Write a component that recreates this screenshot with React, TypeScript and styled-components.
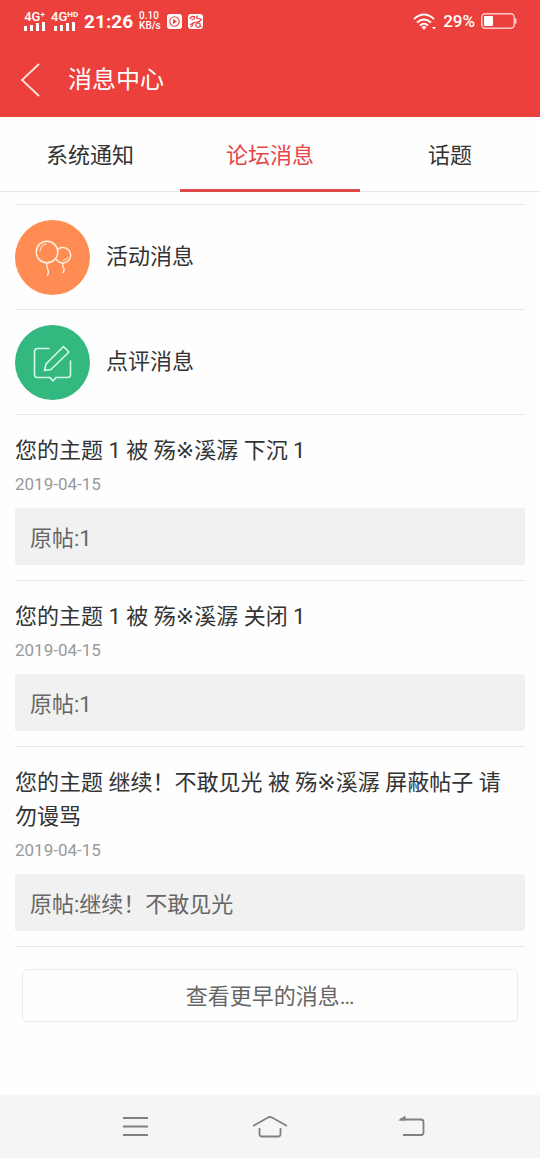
import React from "react";
import styled, { createGlobalStyle } from "styled-components";

const Global = createGlobalStyle`
  * { box-sizing: border-box; }
  body { margin: 0; background: #fefefe; color: #333; font-family: Roboto, "Noto Sans CJK SC", sans-serif; font-size: 22px; }
  button { font: inherit; background: none; border: 0; padding: 0; margin: 0; cursor: pointer; }
  h1, h2, p, ul { margin: 0; padding: 0; font-weight: inherit; font-size: inherit; }
  ul { list-style: none; }
  svg { display: block; }
`;
const Page = styled.div`
  min-height: 100vh;
  display: flex;
  flex-direction: column;
`;
const Top = styled.header`
  background: #ec403c;
  color: #fff;
`;
const StatusBar = styled.div`
  height: 42px;
  padding: 0 23px 0 24px;
  display: flex;
  align-items: center;
  justify-content: space-between;
`;
const StatusGroup = styled.div`
  display: flex;
  align-items: center;
  gap: 6px;
`;
const Signal = styled.div`
  display: flex;
  flex-direction: column;
  align-items: center;
  font-size: 13px;
  line-height: 10px;
  font-weight: 500;
  white-space: nowrap;
`;
const NetKind = styled.span`
  display: flex;
  line-height: 10px;
`;
const Sup = styled.span`
  font-size: 8px;
  line-height: 6px;
  font-weight: 700;
`;
const Clock = styled.time`
  font-size: 19px;
  font-weight: 700;
`;
const Speed = styled.div`
  font-size: 10px;
  line-height: 10px;
  font-weight: 500;
`;
const Percent = styled.span`
  font-size: 17px;
  font-weight: 500;
`;
const TitleBar = styled.div`
  height: 75px;
  padding: 0 20px;
  display: flex;
  align-items: center;
  gap: 28px;
`;
const Title = styled.h1`
  font-size: 24px;
  line-height: 32px;
`;
const IconButton = styled.button`
  color: inherit;
`;
const Tabs = styled.nav`
  display: flex;
  height: 75px;
  border-bottom: 1px solid #e8e8e8;
`;
const Tab = styled.button<{ $active?: boolean }>`
  flex: 1;
  line-height: 32px;
  margin-bottom: -1px;
  padding-top: 2px;
  border-top: 3px solid transparent;
  border-bottom: 3px solid ${(p) => (p.$active ? "#e04a48" : "transparent")};
  color: ${(p) => (p.$active ? "#e64545" : "#333")};
`;
const Main = styled.main`
  padding: 12px 15px 24px;
`;
const Category = styled.a`
  display: flex;
  align-items: center;
  gap: 16px;
  height: 105px;
  border-top: 1px solid #e6e6e6;
  color: inherit;
  text-decoration: none;
`;
const CategoryName = styled.span`
  line-height: 32px;
`;
const Disc = styled.span<{ $color: string }>`
  width: 75px;
  height: 75px;
  border-radius: 50%;
  background: ${(p) => p.$color};
`;
const Message = styled.li`
  border-top: 1px solid #e6e6e6;
  padding: 19px 0 15px;
`;
const Subject = styled.h2`
  font-family: Roboto, "DejaVu Sans", "Noto Sans CJK SC", sans-serif;
  line-height: 34px;
  padding-right: 5px;
`;
const Posted = styled.time`
  display: block;
  font-size: 17px;
  line-height: 32px;
  color: #999;
`;
const Quote = styled.p`
  margin-top: 8px;
  padding: 14px 15px 9px;
  line-height: 34px;
  border-radius: 2px;
  background: #f1f1f1;
  color: #666;
`;
const MoreArea = styled.div`
  border-top: 1px solid #e6e6e6;
  padding: 22px 7px 0;
`;
const More = styled.button`
  width: 100%;
  height: 53px;
  padding-bottom: 3px;
  border: 1px solid #ebebeb;
  border-radius: 5px;
  color: #666;
`;
const SystemNav = styled.nav`
  margin-top: auto;
  height: 63px;
  background: #f5f5f5;
  color: #808080;
  display: flex;
  justify-content: space-between;
  align-items: center;
  padding: 0 21%;
`;

const messages = [
  { topic: "1", action: "下沉 1" },
  { topic: "1", action: "关闭 1" },
  { topic: "继续！不敢见光", action: "屏蔽帖子 请勿谩骂" },
];

const SignalMeter = ({ mark }: { mark: string }) => (
  <Signal>
    <NetKind>4G<Sup>{mark}</Sup></NetKind>
    <svg width="21" height="9" fill="#fff" aria-hidden="true">
      <path d="M0 4h3v5H0zM6 3h3v6H6zM12 1h3v8h-3zM18 0h3v9h-3z" />
    </svg>
  </Signal>
);

const PlayerIcon = () => (
  <svg width="15" height="15" viewBox="0 0 15 15" aria-hidden="true">
    <rect width="15" height="15" rx="3" fill="#fff" />
    <circle cx="7.5" cy="7.5" r="4.700" fill="none" stroke="#ec403c" strokeWidth="1.100" />
    <path d="M6 5l4 2.500-4 2.500z" fill="#ec403c" />
  </svg>
);

const BrowserIcon = () => (
  <svg width="15" height="15" viewBox="0 0 15 15" aria-hidden="true">
    <rect width="15" height="15" rx="3" fill="#fff" />
    <path d="M2 5Q3 1.500 6.500 2.500L6 5 3.500 5.500M9.500 1.500L8.500 4l4 1M13.500 4.500q-1 3.500-4.500 3.500T2 11M5.500 9q-.5 3-3 4M8 10q3-2 4 0t-1.500 3.500q-3 0-2.500-3.500M12.500 12.500l1.500.5" fill="none" stroke="#ec403c" strokeWidth="1.200" />
  </svg>
);

const WifiIcon = () => (
  <svg width="24" height="17" viewBox="0 0 24 17" fill="none" stroke="#fff" strokeWidth="2" aria-hidden="true">
    <path d="M1 6Q11 -3 21 6M4 9.500Q11 3.500 18 9.500M7 12.500Q11 9 15 12.500" />
    <path d="M8.500 14q2.500-2 5 0L11 17zM19 14h4l-2 2.500z" fill="#fff" stroke="none" />
  </svg>
);

const BatteryIcon = () => (
  <svg width="36" height="16" viewBox="0 0 36 16" aria-hidden="true">
    <rect x=".75" y=".75" width="32.500" height="14.500" rx="3.500" fill="none" stroke="#fbc9c7" strokeWidth="1.500" />
    <rect x="3" y="3" width="9" height="10" rx="1" fill="#fff" />
    <path d="M34.500 5.500v5" stroke="#fbc9c7" strokeWidth="2" />
  </svg>
);

const Balloons = () => (
  <svg width="75" height="75" viewBox="0 0 75 75" fill="none" stroke="#fff0e0" strokeWidth="1.500" strokeLinecap="round" aria-hidden="true">
    <circle cx="32" cy="32" r="10.800" />
    <path d="M42.500 29.500a7.800 7.800 0 1 1-1.500 9.500" />
    <path d="M25 31q1-6 6-7M53 37q-1 3-5 3.500" strokeWidth="1" />
    <path d="M32 43.500c-2 5 4 6 .5 12M48 43.500c-2 4 4 5 0 9" strokeWidth="1.300" />
  </svg>
);

const Compose = () => (
  <svg width="75" height="75" viewBox="0 0 75 75" fill="none" stroke="#d4fbe6" strokeWidth="1.600" strokeLinecap="round" strokeLinejoin="round" aria-hidden="true">
    <path d="M34 23.500H22.500q-3 0-3 3v23q0 3 3 3H35l3 3.500 3-3.500h11.500q3 0 3-3V36" />
    <path d="M29.500 45.500l1.500-6.500L48.500 21.500l5.500 5.500L36 44.500z" />
  </svg>
);

export default function App() {
  return (
    <Page>
      <Global />
      <Top>
        <StatusBar>
          <StatusGroup>
            <SignalMeter mark="+" />
            <SignalMeter mark="HD" />
            <Clock>21:26</Clock>
            <Speed>0.10<br />KB/s</Speed>
            <PlayerIcon />
            <BrowserIcon />
          </StatusGroup>
          <StatusGroup>
            <WifiIcon />
            <Percent>29%</Percent>
            <BatteryIcon />
          </StatusGroup>
        </StatusBar>
        <TitleBar>
          <IconButton aria-label="返回">
            <svg width="20" height="34" viewBox="0 0 20 34" fill="none" stroke="#ffe3dc" strokeWidth="1.800">
              <path d="M19 1L2 17l17 16" />
            </svg>
          </IconButton>
          <Title>消息中心</Title>
        </TitleBar>
      </Top>
      <Tabs>
        <Tab>系统通知</Tab>
        <Tab $active aria-current="page">论坛消息</Tab>
        <Tab>话题</Tab>
      </Tabs>
      <Main>
        <Category href="#activity">
          <Disc $color="#ff8c52"><Balloons /></Disc>
          <CategoryName>活动消息</CategoryName>
        </Category>
        <Category href="#comments">
          <Disc $color="#33b87f"><Compose /></Disc>
          <CategoryName>点评消息</CategoryName>
        </Category>
        <ul>
          {messages.map((m) => (
            <Message key={m.action}>
              <Subject>{`您的主题 ${m.topic} 被 殇※溪潺 ${m.action}`}</Subject>
              <Posted dateTime="2019-04-15">2019-04-15</Posted>
              <Quote>{`原帖:${m.topic}`}</Quote>
            </Message>
          ))}
        </ul>
        <MoreArea>
          <More>查看更早的消息…</More>
        </MoreArea>
      </Main>
      <SystemNav>
        <IconButton aria-label="菜单">
          <svg width="44" height="30" viewBox="0 0 44 30" fill="none" stroke="currentColor" strokeWidth="1.800">
            <path d="M10 6h25M10 14.500h25M10 23h25" />
          </svg>
        </IconButton>
        <IconButton aria-label="主页">
          <svg width="44" height="30" viewBox="0 0 44 30" fill="none" stroke="currentColor" strokeWidth="1.800">
            <path d="M5 14L20 5.500q2-1 4 0L39 14M11.500 16v6q0 2.500 2.500 2.500h16q2.500 0 2.500-2.500v-6" />
          </svg>
        </IconButton>
        <IconButton aria-label="后退">
          <svg width="44" height="30" viewBox="-7 0 44 30" fill="none" stroke="currentColor" strokeWidth="1.800">
            <path d="M10 7.500h21q2.500 0 2.500 2.500v10.500q0 2.500-2.500 2.500H13" />
            <path d="M8 8.400l7.500-5v5z" fill="currentColor" stroke="none" />
          </svg>
        </IconButton>
      </SystemNav>
    </Page>
  );
}
